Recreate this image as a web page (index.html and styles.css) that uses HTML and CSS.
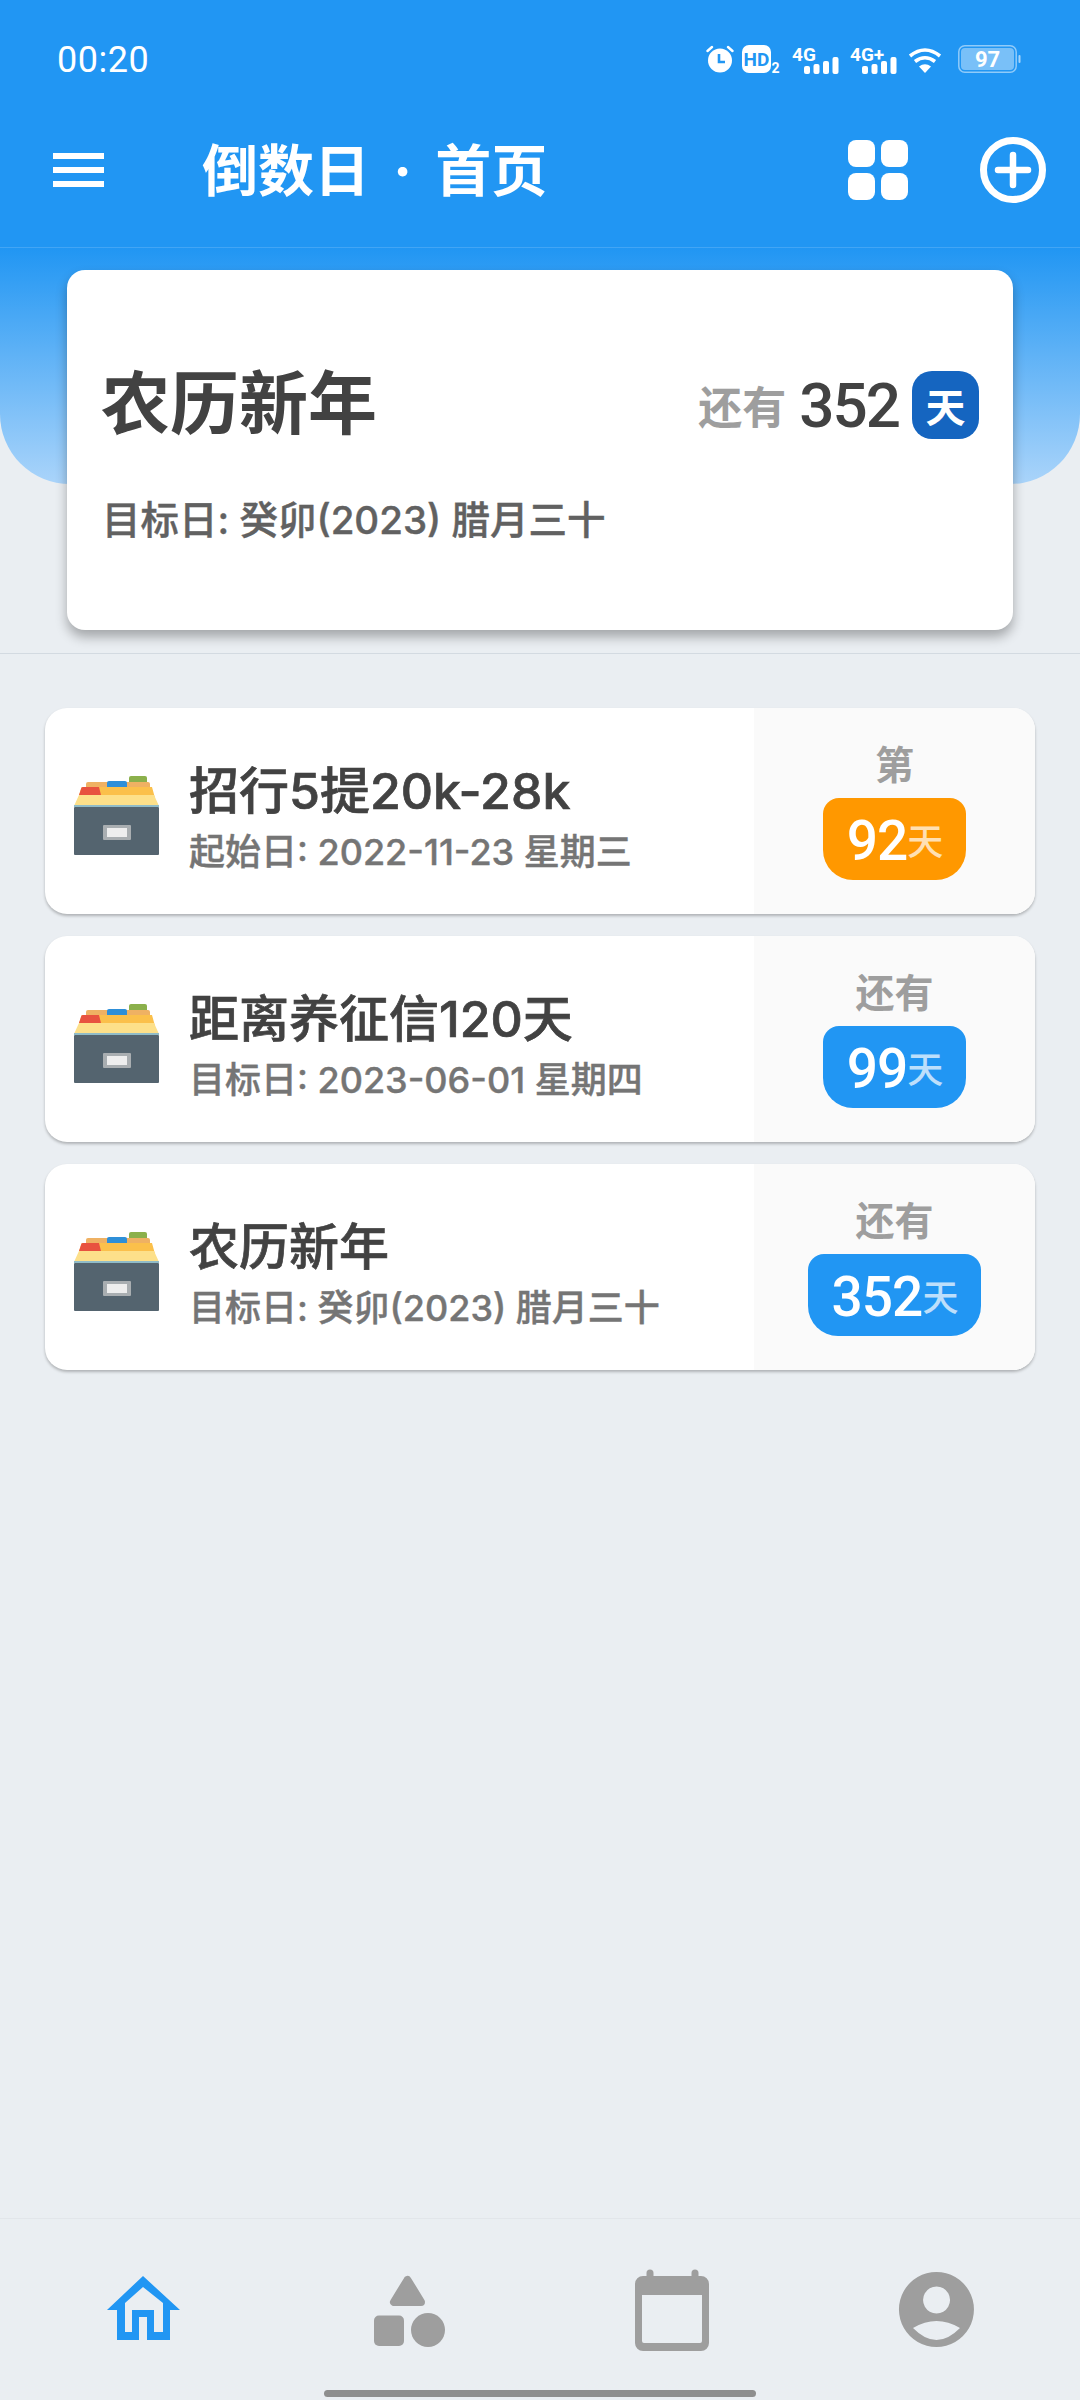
FILE: index.html
```html
<!DOCTYPE html>
<html lang="zh-CN">
<head>
  <meta charset="UTF-8">
  <title>倒数日 · 首页</title>
  <link rel="stylesheet" href="styles.css">
</head>
<body>

<svg class="defs" width="0" height="0">
  <symbol id="cabinet" viewBox="0 0 86 80">
    <rect x="56" y="0" width="18" height="10" rx="2" fill="#8bb04b"/>
    <rect x="13" y="6" width="64" height="8" rx="2" fill="#efb163"/>
    <rect x="34" y="5" width="20" height="9" rx="2" fill="#2e8fd8"/>
    <path d="M6 19 L8 13 Q8 11 10 11 H79 L82 22 H6 Z" fill="#fbc04b"/>
    <path d="M6 19 L8 13 Q8 11 10 11 H26 L28 19 Z" fill="#e8523f"/>
    <path d="M1 30 L6 19 H81 L86 30 Z" fill="#fde08a"/>
    <rect x="1" y="29" width="85" height="2" fill="#90bcc8"/>
    <rect x="1" y="31" width="85" height="48" rx="1" fill="#54646f"/>
    <rect x="30" y="49" width="28" height="15" rx="1" fill="#a9aeb1"/>
    <rect x="34" y="52" width="20" height="9" fill="#eeeeee"/>
  </symbol>
</svg>

<div class="page">
  <header class="appbar">
    <div class="status">
      <span class="time">00:20</span>
      <div class="status-icons">
        <svg class="alarm" width="28" height="36" viewBox="0 0 28 36">
          <circle cx="14" cy="18.5" r="12" fill="#fff"/>
          <path d="M1.5 9 L6 5 M26.5 9 L22 5" stroke="#fff" stroke-width="2.4" stroke-linecap="round"/>
          <path d="M13 12 V20 H19" fill="none" stroke="#2196f3" stroke-width="2.6"/>
        </svg>
        <svg width="39" height="36" viewBox="0 0 39 36">
          <rect y="3" width="29" height="28" rx="7" fill="#fff"/>
          <text class="st-text" x="14.5" y="24" font-size="19" fill="#2196f3" text-anchor="middle">HD</text>
          <text class="st-text" x="29.5" y="31" font-size="14" fill="#fff">2</text>
        </svg>
        <svg width="47" height="36" viewBox="0 0 47 36">
          <text class="st-text" x="0" y="19" font-size="19" fill="#fff">4G</text>
          <rect x="12" y="24" width="6" height="8" rx="2" fill="#fff"/>
          <rect x="21.5" y="22" width="6" height="10" rx="2" fill="#fff"/>
          <rect x="31" y="19" width="6" height="13" rx="2" fill="#fff"/>
          <rect x="40.5" y="15" width="6" height="17" rx="2" fill="#fff"/>
        </svg>
        <svg width="47" height="36" viewBox="0 0 47 36">
          <text class="st-text" x="0" y="19" font-size="19" fill="#fff">4G+</text>
          <rect x="12" y="24" width="6" height="8" rx="2" fill="#fff"/>
          <rect x="21.5" y="22" width="6" height="10" rx="2" fill="#fff"/>
          <rect x="31" y="19" width="6" height="13" rx="2" fill="#fff"/>
          <rect x="40.5" y="15" width="6" height="17" rx="2" fill="#fff"/>
        </svg>
        <svg width="34" height="36" viewBox="0 0 34 36">
          <path d="M2 14 Q17 2 32 14 M7 19.5 Q17 12 27 19.5" fill="none" stroke="#fff" stroke-width="3.6"/>
          <path d="M11 24.5 Q17 20 23 24.5 L17 31 Z" fill="#fff"/>
        </svg>
        <svg class="battery" width="63" height="36" viewBox="0 0 63 36">
          <rect x="0.8" y="3.8" width="57.4" height="26.4" rx="6" fill="none" stroke="#fff" stroke-opacity=".5" stroke-width="1.5"/>
          <rect x="3" y="6" width="53" height="22" rx="4" fill="#fff" fill-opacity=".4"/>
          <rect x="60.5" y="13" width="2" height="8" rx="1" fill="#fff" fill-opacity=".6"/>
          <text class="st-text" x="29.5" y="25" font-size="22" fill="#fff" text-anchor="middle">97</text>
        </svg>
      </div>
    </div>

    <div class="toolbar">
      <div class="menu-btn"><i></i><i></i><i></i></div>
      <h1 class="title">倒数日 · 首页</h1>
      <div class="tile-btn"><i></i><i></i><i></i><i></i></div>
      <svg class="add-btn" width="66" height="66" viewBox="0 0 66 66">
        <circle cx="33" cy="33" r="29.5" fill="none" stroke="#fff" stroke-width="7"/>
        <path d="M18 33 H48 M33 18 V48" stroke="#fff" stroke-width="6.5" stroke-linecap="round"/>
      </svg>
    </div>
  </header>

  <section class="hero">
    <div class="hero-card">
      <div class="hero-top">
        <h2 class="hero-name">农历新年</h2>
        <div class="hero-count">
          <span class="hero-label">还有</span>
          <span class="hero-num">352</span>
          <span class="hero-unit">天</span>
        </div>
      </div>
      <p class="hero-date">目标日: 癸卯(2023) 腊月三十</p>
    </div>
  </section>

  <main class="list">
    <div class="item">
      <div class="item-main">
        <svg class="cabinet"><use href="#cabinet"/></svg>
        <div class="item-text">
          <div class="item-name">招行5提20k-28k</div>
          <div class="item-date">起始日: 2022-11-23 星期三</div>
        </div>
      </div>
      <div class="item-side">
        <div class="side-label">第</div>
        <div class="side-badge orange"><b>92</b><span>天</span></div>
      </div>
    </div>

    <div class="item">
      <div class="item-main">
        <svg class="cabinet"><use href="#cabinet"/></svg>
        <div class="item-text">
          <div class="item-name">距离养征信120天</div>
          <div class="item-date">目标日: 2023-06-01 星期四</div>
        </div>
      </div>
      <div class="item-side">
        <div class="side-label">还有</div>
        <div class="side-badge"><b>99</b><span>天</span></div>
      </div>
    </div>

    <div class="item">
      <div class="item-main">
        <svg class="cabinet"><use href="#cabinet"/></svg>
        <div class="item-text">
          <div class="item-name">农历新年</div>
          <div class="item-date">目标日: 癸卯(2023) 腊月三十</div>
        </div>
      </div>
      <div class="item-side">
        <div class="side-label">还有</div>
        <div class="side-badge"><b>352</b><span>天</span></div>
      </div>
    </div>
  </main>

  <footer class="tabbar">
    <nav class="tabs">
      <svg width="84" height="84" viewBox="0 0 84 84">
        <path fill="#2196f3" fill-rule="evenodd" d="M41 8 L78 42 H68 V72 H45 V49 H37 V72 H15 V42 H5 Z M41 19 L23 35 V64 H30 V42 H52 V64 H61 V35 Z"/>
      </svg>
      <svg width="84" height="84" viewBox="0 0 84 84">
        <path d="M41.5 12 L28 34 H55 Z" fill="#9e9e9e" stroke="#9e9e9e" stroke-width="8" stroke-linejoin="round"/>
        <rect x="8" y="47.5" width="30" height="30.5" rx="5" fill="#9e9e9e"/>
        <circle cx="62" cy="62" r="17" fill="#9e9e9e"/>
      </svg>
      <svg width="84" height="84" viewBox="0 0 84 84">
        <path fill="#9e9e9e" fill-rule="evenodd" d="M13 8 H16.5 V5 A3.5 3.5 0 0 1 23.5 5 V8 H61.5 V5 A3.5 3.5 0 0 1 68.5 5 V8 H71 A8 8 0 0 1 79 16 V75 A8 8 0 0 1 71 83 H13 A8 8 0 0 1 5 75 V16 A8 8 0 0 1 13 8 Z M12 27 V73 A2 2 0 0 0 14 75 H70 A2 2 0 0 0 72 73 V27 Z"/>
      </svg>
      <svg width="84" height="84" viewBox="0 0 84 84">
        <path fill="#9e9e9e" fill-rule="evenodd" d="M42.5 4 A37.5 37.5 0 1 1 42.4 4 Z M42.5 18.5 A13.5 13.5 0 1 0 42.6 18.5 Z M19 60 Q42.5 84 66 60 Q42.5 46 19 60 Z"/>
      </svg>
    </nav>
    <div class="home-bar"></div>
  </footer>
</div>

</body>
</html>
```

FILE: styles.css
```css
* {
  box-sizing: border-box;
}
body {
  margin: 0;
  background: #eaeef2;
  font-family: Inter, "Noto Sans CJK SC", sans-serif;
}
h1, h2, p {
  margin: 0;
}
.defs {
  position: absolute;
}
.page {
  height: 2400px;
  display: flex;
  flex-direction: column;
  overflow: hidden;
}

/* top bar */
.appbar {
  background: #2196f3;
  color: #fff;
}
.status {
  height: 92px;
  padding: 28px 59px 0 57px;
  display: flex;
  justify-content: space-between;
  align-items: center;
}
.time {
  font-family: Roboto, sans-serif;
  font-size: 36px;
  letter-spacing: .5px;
}
.status-icons {
  display: flex;
  align-items: center;
  gap: 11px;
}
.alarm {
  margin-right: -3px;
}
.battery {
  margin-left: 5px;
}
.st-text {
  font-family: Roboto, sans-serif;
  font-weight: 700;
}
.toolbar {
  height: 156px;
  padding: 0 34px 0 53px;
  display: flex;
  align-items: center;
  border-bottom: 1px solid #42a5f5;
}
.menu-btn {
  width: 51px;
  display: flex;
  flex-direction: column;
  gap: 8px;
}
.menu-btn i {
  height: 6px;
  background: #fff;
}
.title {
  margin-left: 98px;
  margin-right: auto;
  margin-bottom: 6px;
  font-size: 56px;
  font-weight: 700;
  word-spacing: 10px;
}
.tile-btn {
  width: 60px;
  height: 60px;
  display: grid;
  grid-template-columns: 1fr 1fr;
  gap: 6px;
}
.tile-btn i {
  background: #fff;
  border-radius: 8px;
}
.add-btn {
  margin-left: 72px;
}

/* hero card */
.hero {
  position: relative;
  padding: 22px 67px 23px;
  border-bottom: 1px solid #d3dae1;
}
.hero::before {
  content: "";
  position: absolute;
  left: 0;
  right: 0;
  top: 0;
  height: 236px;
  background: linear-gradient(#2196f3, #aad4fa);
  border-radius: 0 0 70px 70px;
}
.hero-card {
  position: relative;
  height: 360px;
  padding: 95px 34px 0 34px;
  background: #fff;
  border-radius: 18px;
  box-shadow: 0 7px 12px rgba(0, 0, 0, .3);
}
.hero-top {
  display: flex;
  justify-content: space-between;
  align-items: center;
  height: 80px;
}
.hero-name {
  margin-bottom: 12px;
  font-size: 69px;
  font-weight: 700;
  color: #424242;
}
.hero-count {
  display: flex;
  align-items: center;
  gap: 13px;
}
.hero-label {
  font-size: 44px;
  font-weight: 700;
  color: #9e9e9e;
}
.hero-num {
  font-family: Roboto, sans-serif;
  font-size: 62px;
  font-weight: 500;
  letter-spacing: -2px;
  color: #424242;
}
.hero-unit {
  width: 67px;
  height: 68px;
  border-radius: 20px;
  background: #1565c0;
  color: #fff;
  font-size: 40px;
  font-weight: 700;
  display: flex;
  align-items: center;
  justify-content: center;
}
.hero-date {
  margin-top: 44px;
  margin-left: 1px;
  font-size: 38.5px;
  font-weight: 500;
  -webkit-text-stroke: .4px #616161;
  color: #616161;
}

/* list */
.list {
  padding: 54px 45px 0;
  display: flex;
  flex-direction: column;
  gap: 22px;
}
.item {
  height: 206px;
  display: flex;
  background: #fff;
  border-radius: 22px;
  overflow: hidden;
  box-shadow: 0 2px 3px rgba(0, 0, 0, .25);
}
.item-main {
  flex: 1;
  padding: 9px 0 0 28px;
  display: flex;
  align-items: center;
  gap: 30px;
}
.cabinet {
  width: 86px;
  height: 80px;
}
.item-text {
  padding-top: 7px;
}
.item-name {
  font-size: 50px;
  font-weight: 500;
  -webkit-text-stroke: .7px #424242;
  line-height: 66px;
  color: #424242;
}
.item-date {
  font-size: 36px;
  font-weight: 500;
  -webkit-text-stroke: .4px #757575;
  line-height: 56px;
  color: #757575;
}
.item-side {
  width: 281px;
  background: #fafafa;
  display: flex;
  flex-direction: column;
  align-items: center;
  padding-top: 32px;
}
.side-label {
  font-size: 39px;
  font-weight: 700;
  line-height: 50px;
  color: #9e9e9e;
}
.side-badge {
  margin-top: 8px;
  height: 82px;
  padding: 0 23px 0 24px;
  background: #2196f3;
  color: #fff;
  border-radius: 16px 16px 30px 30px;
  display: flex;
  align-items: center;
}
.side-badge.orange {
  background: #ff9800;
}
.side-badge b {
  margin-top: 4px;
  font-family: Roboto, sans-serif;
  font-size: 55px;
  font-weight: 500;
  letter-spacing: -1px;
}
.side-badge span {
  font-size: 36px;
  font-weight: 500;
  opacity: .7;
}

/* bottom tabs */
.tabbar {
  margin-top: auto;
  height: 182px;
  border-top: 1px solid #e2e6ea;
  padding-top: 49px;
}
.tabs {
  padding: 0 12px;
  display: grid;
  grid-template-columns: repeat(4, 1fr);
  justify-items: center;
}
.tabs svg {
  display: block;
}
.home-bar {
  width: 432px;
  height: 7px;
  margin: 38px auto 0;
  background: #8e8e8e;
  border-radius: 4px;
}
```
